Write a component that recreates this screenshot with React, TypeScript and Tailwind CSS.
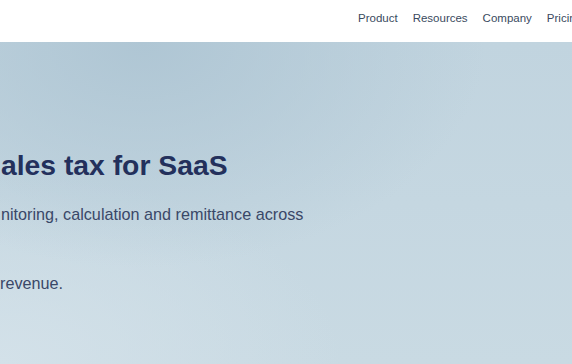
import React from "react";

export default function App() {
  const font = { fontFamily: '"Liberation Sans", Arial, sans-serif' };
  return (
    <div className="w-[572px] h-[364px] overflow-hidden flex flex-col" style={font}>
      <header className="h-[42px] shrink-0 bg-white flex items-start overflow-hidden">
        <nav className="flex shrink-0 gap-[15px] pt-[10px] ml-[358px] text-[11.5px] leading-[16px] text-[#3a4a60] whitespace-nowrap">
          <a>Product</a>
          <a>Resources</a>
          <a>Company</a>
          <a>Pricing</a>
        </nav>
      </header>
      <main className="flex-1 bg-[radial-gradient(ellipse_60%_70%_at_25%_0%,#afc6d4,transparent),radial-gradient(ellipse_60%_60%_at_0%_100%,#d3e1e9,transparent),linear-gradient(180deg,#c1d4df,#c9dae3)] flex flex-col">
        <h1 className="mt-[107px] ml-[1px] text-[28.3px] leading-[32px] font-bold text-[#23305c] whitespace-nowrap">
          ales tax for SaaS
        </h1>
        <p className="mt-[23px] ml-[1px] text-[16.2px] leading-[20px] text-[#3a4868] whitespace-nowrap">
          nitoring, calculation and remittance across
        </p>
        <p className="mt-[49px] ml-[0px] text-[16.2px] leading-[20px] text-[#3a4868]">
          revenue.
        </p>
      </main>
    </div>
  );
}
